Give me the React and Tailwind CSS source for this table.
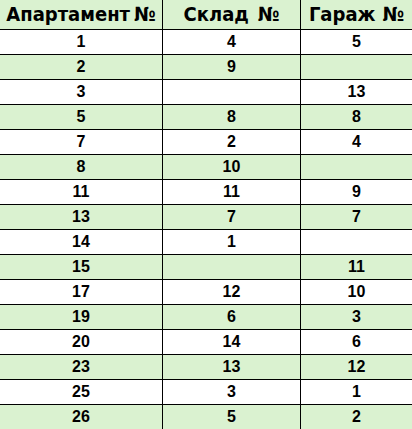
import React from 'react';

// rows of the apartment / storage / garage table
const rows = [
  ['1', '4', '5'],
  ['2', '9', ''],
  ['3', '', '13'],
  ['5', '8', '8'],
  ['7', '2', '4'],
  ['8', '10', ''],
  ['11', '11', '9'],
  ['13', '7', '7'],
  ['14', '1', ''],
  ['15', '', '11'],
  ['17', '12', '10'],
  ['19', '6', '3'],
  ['20', '14', '6'],
  ['23', '13', '12'],
  ['25', '3', '1'],
  ['26', '5', '2'],
];

// label + gap before the № sign (the sheet pads some headers a bit more)
const headers = [
  { label: 'Апартамент', gap: 'ml-[4px]' },
  { label: 'Склад', gap: 'ml-[9px]' },
  { label: 'Гараж', gap: 'ml-[7px]' },
];

export default function App() {
  return (
    <div className="w-[412px] h-[429px] overflow-hidden bg-white text-black">
      <div className="grid grid-cols-[163px_138px_1fr] h-[30px] bg-[#daf2d0] border-b border-black">
        {headers.map((h, i) => (
          <div
            key={h.label}
            className={`flex items-center justify-center pb-[1px] text-[20px] font-bold leading-none whitespace-nowrap font-['Liberation_Sans_Narrow','DejaVu_Sans_Condensed',sans-serif] ${i < 2 ? 'border-r border-black' : ''}`}
          >
            <span>{h.label}</span>
            <span className={h.gap}>№</span>
          </div>
        ))}
      </div>
      {rows.map((r, idx) => (
        <div
          key={idx}
          className={`grid grid-cols-[163px_138px_1fr] h-[25px] border-b border-black ${idx % 2 === 1 ? 'bg-[#daf2d0]' : 'bg-white'}`}
        >
          {r.map((v, i) => (
            <div
              key={i}
              className={`flex items-center justify-center text-[16px] font-bold leading-none font-['Liberation_Sans',Arial,sans-serif] ${i < 2 ? 'border-r border-black' : ''}`}
            >
              {v}
            </div>
          ))}
        </div>
      ))}
    </div>
  );
}
